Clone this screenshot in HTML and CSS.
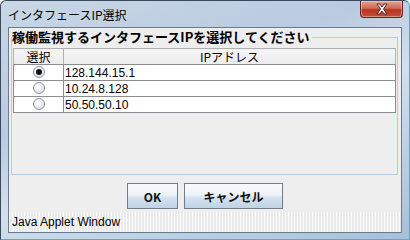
FILE: index.html
```html
<!DOCTYPE html>
<html lang="ja">
<head>
  <meta charset="UTF-8">
  <title>インタフェースIP選択</title>
  <link rel="stylesheet" href="styles.css">
</head>
<body>

  <!-- Fenêtre de dialogue -->
  <div class="window">

    <!-- Barre de titre -->
    <div class="titlebar">
      <span class="title">インタフェースIP選択</span>
      <button class="close">
        <svg width="16" height="12" viewBox="0 0 16 12">
          <path d="M3 1 L6 1 L8 4 L10 1 L13 1 L9.5 6 L13 11 L10 11 L8 8 L6 11 L3 11 L6.5 6 Z" fill="#fff" stroke="#4a2a26" stroke-width="1"/>
        </svg>
      </button>
    </div>

    <!-- Zone client -->
    <div class="client">
      <fieldset class="groupe">
        <legend>稼働監視するインタフェースIPを選択してください</legend>

        <table class="tableau">
          <thead>
            <tr>
              <th class="col-choix">選択</th>
              <th>IPアドレス</th>
            </tr>
          </thead>
          <tbody>
            <tr>
              <td class="col-choix"><span class="radio coche"></span></td>
              <td>128.144.15.1</td>
            </tr>
            <tr>
              <td class="col-choix"><span class="radio"></span></td>
              <td>10.24.8.128</td>
            </tr>
            <tr>
              <td class="col-choix"><span class="radio"></span></td>
              <td>50.50.50.10</td>
            </tr>
          </tbody>
        </table>
      </fieldset>

      <!-- Boutons -->
      <div class="boutons">
        <button class="bouton ok">OK</button>
        <button class="bouton annuler">キャンセル</button>
      </div>

      <!-- Barre d'état -->
      <div class="statut">Java Applet Window</div>
    </div>
  </div>

</body>
</html>
```

FILE: styles.css
```css
/* Base de la page */
body {
  margin: 0;
  font-family: "Liberation Sans", "Noto Sans CJK JP", sans-serif;
  font-size: 12px;
  color: #000;
}

/* Cadre de la fenêtre */
.window {
  width: 410px;
  height: 240px;
  box-sizing: border-box;
  padding: 0 7px 6px 7px;
  display: flex;
  flex-direction: column;
  background: linear-gradient(160deg, #c9d7e6 0%, #b9cbe0 35%, #d3dfec 55%, #a9bfd8 100%);
  border: 1px solid #3a4a5e;
  border-bottom-color: #3ab4e0;
  border-right-color: #3ab4e0;
  border-radius: 6px 6px 0 0;
}

/* Barre de titre */
.titlebar {
  height: 26px;
  display: flex;
  align-items: flex-start;
}

.title {
  margin-top: 6px;
  font-family: "Noto Sans CJK JP", sans-serif;
  font-size: 12px;
  line-height: 15px;
  color: #000;
}

.close {
  margin-left: auto;
  margin-right: -1px;
  width: 43px;
  height: 17px;
  padding: 0;
  border: 1px solid #5a2a22;
  border-top: none;
  border-radius: 0 0 4px 4px;
  background: linear-gradient(#e4a496 0%, #d06a56 45%, #b8321f 55%, #c6503a 100%);
  box-shadow: inset 0 0 0 1px rgba(255, 255, 255, 0.35);
  display: flex;
  align-items: center;
  justify-content: center;
}

/* Zone client */
.client {
  flex: 1;
  display: flex;
  flex-direction: column;
  background: #eeeeee;
  border: 1px solid #6b7a8c;
}

/* Cadre du groupe */
.groupe {
  margin: 2px 3px 0 2px;
  padding: 4px 1px 0 1px;
  height: 145px;
  box-sizing: border-box;
  border: 1px solid #b5cde4;
}

.groupe legend {
  padding: 0 2px 0 0;
  margin-left: -1px;
  font-family: "Noto Sans CJK JP", sans-serif;
  font-weight: bold;
  font-size: 13px;
  line-height: 14px;
}

/* Tableau */
.tableau {
  width: 100%;
  border-collapse: collapse;
  background: #fff;
  border: 1px solid #7a7a7a;
}

.tableau th,
.tableau td {
  border: 1px solid #8a8e94;
  padding: 0 1px;
  height: 15px;
  line-height: 14px;
  text-align: left;
  font-weight: normal;
}

.tableau th {
  height: 15px;
  text-align: center;
  background: linear-gradient(#f6f6f6, #ececec);
  font-family: "Noto Sans CJK JP", sans-serif;
  border-color: #b0b0b0 #b0b0b0 #8a8e94 #b0b0b0;
}

.tableau .col-choix {
  width: 47px;
  text-align: center;
}

/* Boutons radio */
.radio {
  display: inline-block;
  width: 10px;
  height: 10px;
  border: 1px solid #8b96a3;
  border-radius: 50%;
  background: radial-gradient(circle at 40% 35%, #ffffff 0%, #e3e8ee 60%, #c6cfd9 100%);
  vertical-align: middle;
  position: relative;
  top: -1px;
}

.radio.coche::after {
  content: "";
  display: block;
  width: 6px;
  height: 6px;
  margin: 2px;
  border-radius: 50%;
  background: #111;
}

/* Zone des boutons */
.boutons {
  display: flex;
  justify-content: center;
  gap: 6px;
  margin-top: 8px;
}

.bouton {
  height: 26px;
  padding: 0;
  border: 1px solid #6e7c8c;
  background: linear-gradient(#f8fbfd 0%, #eef3f8 45%, #d6e3ef 55%, #bfd3e6 100%);
  font-family: "Noto Sans CJK JP", sans-serif;
  font-weight: bold;
  font-size: 12px;
  color: #111;
}

.ok {
  width: 51px;
}

.annuler {
  width: 99px;
}

/* Barre d'état */
.statut {
  margin-top: auto;
  height: 20px;
  padding-left: 3px;
  line-height: 20px;
  font-family: "Liberation Sans", sans-serif;
  font-size: 12px;
  background-color: #eaeaea;
  background-image: linear-gradient(90deg, #fbfbfb 1px, transparent 1px),
                    linear-gradient(#eaeaea 2px, transparent 2px);
  background-size: 3px 3px;
}
```
